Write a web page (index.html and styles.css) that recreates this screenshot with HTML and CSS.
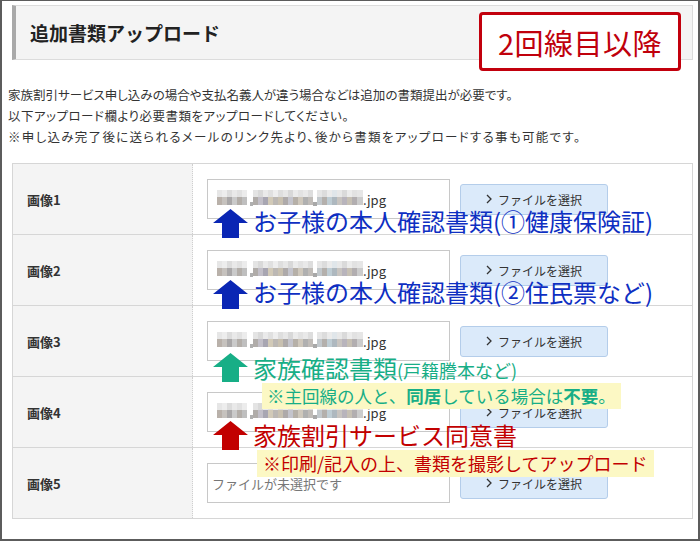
FILE: index.html
```html
<!DOCTYPE html>
<html lang="ja">
<head>
<meta charset="utf-8">
<title>追加書類アップロード</title>
<link rel="stylesheet" href="styles.css">
</head>
<body>
<svg class="defs" width="0" height="0" aria-hidden="true">
  <defs>
    <symbol id="blur" viewBox="0 0 146 16">
      <rect x="0" y="0" width="5" height="7" fill="#e6e6e6"/><rect x="5" y="0" width="5" height="7" fill="#ededed"/><rect x="10" y="0" width="5" height="7" fill="#dcdcdc"/><rect x="15" y="0" width="5" height="7" fill="#e9e9e9"/><rect x="20" y="0" width="5" height="7" fill="#e1e1e1"/><rect x="25" y="0" width="5" height="7" fill="#ececec"/>
      <rect x="0" y="7" width="5" height="8" fill="#b9b1aa"/><rect x="5" y="7" width="5" height="8" fill="#c6c2be"/><rect x="10" y="7" width="5" height="8" fill="#a9a7a8"/><rect x="15" y="7" width="5" height="8" fill="#cacaca"/><rect x="20" y="7" width="5" height="8" fill="#b3aea9"/><rect x="25" y="7" width="5" height="8" fill="#bfbfbf"/>
      <rect x="33" y="12" width="3" height="4" fill="#b0b0b0"/>
      <rect x="36" y="0" width="5" height="7" fill="#e4e4e4"/><rect x="41" y="0" width="5" height="7" fill="#d9d9d9"/><rect x="46" y="0" width="5" height="7" fill="#eaeaea"/><rect x="51" y="0" width="5" height="7" fill="#e0e0e0"/><rect x="56" y="0" width="5" height="7" fill="#eeeeee"/><rect x="61" y="0" width="5" height="7" fill="#dedede"/><rect x="66" y="0" width="5" height="7" fill="#e7e7e7"/><rect x="71" y="0" width="5" height="7" fill="#d8d8d8"/><rect x="76" y="0" width="5" height="7" fill="#ebebeb"/><rect x="81" y="0" width="5" height="7" fill="#e2e2e2"/><rect x="86" y="0" width="5" height="7" fill="#e9e9e9"/><rect x="91" y="0" width="5" height="7" fill="#dddddd"/>
      <rect x="36" y="7" width="5" height="8" fill="#b0aca9"/><rect x="41" y="7" width="5" height="8" fill="#c2bfc8"/><rect x="46" y="7" width="5" height="8" fill="#a8a6b2"/><rect x="51" y="7" width="5" height="8" fill="#d2cab8"/><rect x="56" y="7" width="5" height="8" fill="#bcb8b4"/><rect x="61" y="7" width="5" height="8" fill="#c8c0b0"/><rect x="66" y="7" width="5" height="8" fill="#aeaaaa"/><rect x="71" y="7" width="5" height="8" fill="#c4c4cc"/><rect x="76" y="7" width="5" height="8" fill="#b6b0a8"/><rect x="81" y="7" width="5" height="8" fill="#cfc8bc"/><rect x="86" y="7" width="5" height="8" fill="#b0b0b0"/><rect x="91" y="7" width="5" height="8" fill="#c0bcb8"/>
      <rect x="96" y="12" width="4" height="4" fill="#a8a8a8"/>
      <rect x="100" y="0" width="5" height="7" fill="#e6e6e6"/><rect x="105" y="0" width="5" height="7" fill="#dcdcdc"/><rect x="110" y="0" width="5" height="7" fill="#ebebeb"/><rect x="115" y="0" width="5" height="7" fill="#e0e6ea"/><rect x="120" y="0" width="5" height="7" fill="#e8e8e8"/><rect x="125" y="0" width="5" height="7" fill="#dadada"/><rect x="130" y="0" width="5" height="7" fill="#ececec"/><rect x="135" y="0" width="5" height="7" fill="#e2e2e2"/><rect x="140" y="0" width="6" height="7" fill="#e6e6e6"/>
      <rect x="100" y="7" width="5" height="8" fill="#c2c8cc"/><rect x="105" y="7" width="5" height="8" fill="#b4b0ac"/><rect x="110" y="7" width="5" height="8" fill="#bfcdd4"/><rect x="115" y="7" width="5" height="8" fill="#aeb8bf"/><rect x="120" y="7" width="5" height="8" fill="#c8c4c0"/><rect x="125" y="7" width="5" height="8" fill="#b8b4bc"/><rect x="130" y="7" width="5" height="8" fill="#c6c0b4"/><rect x="135" y="7" width="5" height="8" fill="#b2aeb0"/><rect x="140" y="7" width="6" height="8" fill="#cccccc"/>
    </symbol>
    <symbol id="chev" viewBox="0 0 6 10">
      <polyline points="1,1 5,5 1,9" fill="none" stroke="#333" stroke-width="1.3"/>
    </symbol>
    <symbol id="arrow" viewBox="0 0 35 29">
      <polygon points="17.5,0 35,14 26,14 26,29 9,29 9,14 0,14"/>
    </symbol>
  </defs>
</svg>

<div class="frame">
  <div class="head">
    <h2 class="title">追加書類アップロード</h2>
  </div>
  <div class="badge">2回線目以降</div>

  <div class="intro">
    <p>家族割引サービス申し込みの場合や支払名義人が違う場合などは追加の書類提出が必要です。</p>
    <p class="mid">以下アップロード欄より必要書類をアップロードしてください。</p>
    <p class="wide">※申し込み完了後に送られるメールのリンク先より、後から書類をアップロードする事も可能です。</p>
  </div>

  <div class="uploads">
    <div class="row">
      <div class="label">画像1</div>
      <div class="cell">
        <div class="file"><svg class="blur"><use href="#blur"/></svg><span>.jpg</span></div>
        <div class="btn"><svg class="chev"><use href="#chev"/></svg>ファイルを選択</div>
      </div>
    </div>
    <div class="row">
      <div class="label">画像2</div>
      <div class="cell">
        <div class="file"><svg class="blur"><use href="#blur"/></svg><span>.jpg</span></div>
        <div class="btn"><svg class="chev"><use href="#chev"/></svg>ファイルを選択</div>
      </div>
    </div>
    <div class="row">
      <div class="label">画像3</div>
      <div class="cell">
        <div class="file"><svg class="blur"><use href="#blur"/></svg><span>.jpg</span></div>
        <div class="btn"><svg class="chev"><use href="#chev"/></svg>ファイルを選択</div>
      </div>
    </div>
    <div class="row">
      <div class="label">画像4</div>
      <div class="cell">
        <div class="file"><svg class="blur"><use href="#blur"/></svg><span>.jpg</span></div>
        <div class="btn"><svg class="chev"><use href="#chev"/></svg>ファイルを選択</div>
      </div>
    </div>
    <div class="row">
      <div class="label">画像5</div>
      <div class="cell">
        <div class="file empty">ファイルが未選択です</div>
        <div class="btn"><svg class="chev"><use href="#chev"/></svg>ファイルを選択</div>
      </div>
    </div>

    <div class="note note-1 blue">
      <svg class="arrow"><use href="#arrow"/></svg>
      <span class="big">お子様の本人確認書類(①健康保険証)</span>
    </div>
    <div class="note note-2 blue">
      <svg class="arrow"><use href="#arrow"/></svg>
      <span class="big">お子様の本人確認書類(②住民票など)</span>
    </div>
    <div class="note note-3 green">
      <svg class="arrow"><use href="#arrow"/></svg>
      <span class="big">家族確認書類<small>(戸籍謄本など)</small></span>
    </div>
    <div class="memo memo-1 green">※主回線の人と、<b>同居</b>している場合は<b>不要</b>。</div>
    <div class="note note-4 red">
      <svg class="arrow"><use href="#arrow"/></svg>
      <span class="big">家族割引サービス同意書</span>
    </div>
    <div class="memo memo-2 red">※印刷/記入の上、書類を撮影してアップロード</div>
  </div>
</div>
</body>
</html>
```

FILE: styles.css
```css
* { box-sizing: border-box; }

html, body {
  margin: 0;
  padding: 0;
}

body {
  width: 700px;
  height: 541px;
  overflow: hidden;
  background: #fff;
  color: #333;
  font-family: "Noto Sans CJK JP", "Noto Sans", sans-serif;
}

.defs {
  position: absolute;
  width: 0;
  height: 0;
}

.frame {
  position: relative;
  width: 700px;
  height: 541px;
  border: 2px solid #5c5c5c;
  border-top-width: 1px;
  padding: 4px 5px 0 6px;
}

.head {
  margin-left: 4px;
  height: 55px;
  background: #f4f4f4;
  border: 1px solid #dcdcdc;
  border-left: 4px solid #a9a9a9;
  display: flex;
  align-items: center;
  padding-left: 14px;
}

.title {
  margin: 0;
  font-size: 19px;
  font-weight: bold;
  color: #222;
}

.badge {
  position: absolute;
  left: 477px;
  top: 11px;
  width: 202px;
  height: 59px;
  border: 3px solid #c2000d;
  border-radius: 4px;
  background: #fff;
  color: #c0000c;
  font-size: 29px;
  letter-spacing: 0.5px;
  display: flex;
  align-items: center;
  justify-content: center;
}

.intro {
  margin-top: 24px;
  font-size: 12.5px;
  line-height: 21px;
  color: #333;
  font-feature-settings: "palt";
}

.intro p {
  margin: 0;
}

.intro .mid {
  letter-spacing: 0.5px;
}

.intro .wide {
  letter-spacing: 1.3px;
}

.uploads {
  position: relative;
  margin-top: 16px;
  margin-left: 4px;
  width: 681px;
  border: 1px solid #d6d6d6;
  border-bottom: none;
}

.row {
  display: grid;
  grid-template-columns: 180px 1fr;
  height: 71px;
  border-bottom: 1px solid #d6d6d6;
}

.label {
  background: #f4f4f4;
  border-right: 1px dotted #cfcfcf;
  display: flex;
  align-items: center;
  padding-left: 14px;
  font-size: 13px;
  font-weight: bold;
  color: #333;
}

.cell {
  display: flex;
  align-items: center;
  gap: 10px;
  padding-left: 14px;
}

.file {
  width: 243px;
  height: 40px;
  border: 1px solid #c8c8c8;
  background: #fff;
  display: flex;
  align-items: center;
  padding-left: 9px;
  font-size: 13px;
  color: #333;
}

.file.empty {
  padding-left: 4px;
  color: #777;
}

.blur {
  width: 146px;
  height: 16px;
  margin-top: -2px;
}

.btn {
  width: 148px;
  height: 31px;
  background: #dbeafa;
  border: 1px solid #b4cdea;
  border-radius: 3px;
  display: flex;
  align-items: center;
  justify-content: center;
  gap: 6px;
  font-size: 12px;
  color: #333;
}

.chev {
  width: 6px;
  height: 10px;
}

/* annotations laid over the table */
.note {
  position: absolute;
  left: 200px;
  display: flex;
  align-items: flex-start;
  gap: 5px;
}

.arrow {
  width: 35px;
  height: 29px;
  margin-top: 2px;
  fill: currentColor;
}

.big {
  font-size: 24px;
  line-height: 28px;
  white-space: nowrap;
}

.big small {
  font-size: 18px;
}

.blue { color: #0e2fc2; }
.blue .arrow { color: #0a26b4; }
.green { color: #17ae86; }
.red { color: #c20000; }

.note-1 { top: 43px; }
.note-2 { top: 114px; }
.note-3 { top: 190px; }
.note-3 .arrow { margin-top: -1px; }
.note-4 { top: 257px; }
.note-4 .arrow { margin-top: 0; }

.memo {
  position: absolute;
  background: #fcf8c4;
  white-space: nowrap;
  padding: 0 5px;
}

.memo-1 {
  left: 249px;
  top: 219px;
  height: 26px;
  line-height: 26px;
  font-size: 17.5px;
}

.memo-1 b {
  font-weight: bold;
}

.memo-2 {
  left: 244px;
  top: 286px;
  height: 27px;
  line-height: 27px;
  font-size: 18px;
  padding: 0 6px;
}
```
